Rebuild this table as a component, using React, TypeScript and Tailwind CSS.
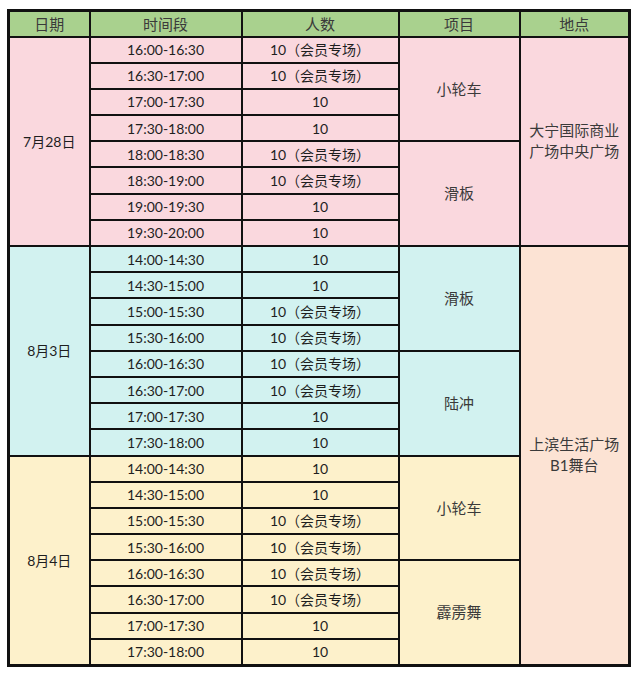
import React from "react";

type Group = {
  date: string;
  bg: string;
  times: string[];
  counts: string[];
  items: string[];
};

const MEMBER = "10（会员专场）";

const groups: Group[] = [
  {
    date: "7月28日",
    bg: "bg-[#fad8de]",
    times: ["16:00-16:30", "16:30-17:00", "17:00-17:30", "17:30-18:00", "18:00-18:30", "18:30-19:00", "19:00-19:30", "19:30-20:00"],
    counts: [MEMBER, MEMBER, "10", "10", MEMBER, MEMBER, "10", "10"],
    items: ["小轮车", "滑板"],
  },
  {
    date: "8月3日",
    bg: "bg-[#d2f2f0]",
    times: ["14:00-14:30", "14:30-15:00", "15:00-15:30", "15:30-16:00", "16:00-16:30", "16:30-17:00", "17:00-17:30", "17:30-18:00"],
    counts: ["10", "10", MEMBER, MEMBER, MEMBER, MEMBER, "10", "10"],
    items: ["滑板", "陆冲"],
  },
  {
    date: "8月4日",
    bg: "bg-[#fdf1cb]",
    times: ["14:00-14:30", "14:30-15:00", "15:00-15:30", "15:30-16:00", "16:00-16:30", "16:30-17:00", "17:00-17:30", "17:30-18:00"],
    counts: ["10", "10", MEMBER, MEMBER, MEMBER, MEMBER, "10", "10"],
    items: ["小轮车", "霹雳舞"],
  },
];

const cell = "border-2 border-[#111] text-center align-middle p-0";
const soft = "text-[#3a3a3a] text-[15px]";

export default function App() {
  return (
    <div className="min-h-screen bg-white pt-[9px] pl-[7px] font-['Lato','Noto_Sans_CJK_SC',sans-serif] text-[14px] text-[#1e1e1e]">
      <table className="table-fixed border-collapse w-[621px] border-[3px] border-[#111]">
        <colgroup>
          <col className="w-[81px]" />
          <col className="w-[152px]" />
          <col className="w-[157px]" />
          <col className="w-[121px]" />
          <col className="w-[110px]" />
        </colgroup>
        <thead>
          <tr className="h-[26px] bg-[#a9d18e]">
            <th className={`${cell} font-normal ${soft}`}>日期</th>
            <th className={`${cell} font-normal ${soft}`}>时间段</th>
            <th className={`${cell} font-normal ${soft}`}>人数</th>
            <th className={`${cell} font-normal ${soft}`}>项目</th>
            <th className={`${cell} font-normal ${soft}`}>地点</th>
          </tr>
        </thead>
        <tbody>
          {groups.map((g, gi) =>
            g.times.map((t, i) => (
              <tr key={`${gi}-${i}`} className={`h-[26.2px] ${g.bg}`}>
                {i === 0 && (
                  <td rowSpan={8} className={cell}>
                    {g.date}
                  </td>
                )}
                <td className={cell}>{t}</td>
                <td className={cell}>{g.counts[i]}</td>
                {i % 4 === 0 && (
                  <td rowSpan={4} className={`${cell} ${soft}`}>
                    {g.items[i / 4]}
                  </td>
                )}
                {gi === 0 && i === 0 && (
                  <td rowSpan={8} className={`${cell} ${soft} leading-[21px]`}>
                    大宁国际商业
                    <br />
                    广场中央广场
                  </td>
                )}
                {gi === 1 && i === 0 && (
                  <td rowSpan={16} className={`${cell} ${soft} bg-[#fce3d4] leading-[21px]`}>
                    上滨生活广场
                    <br />
                    B1舞台
                  </td>
                )}
              </tr>
            ))
          )}
        </tbody>
      </table>
    </div>
  );
}
